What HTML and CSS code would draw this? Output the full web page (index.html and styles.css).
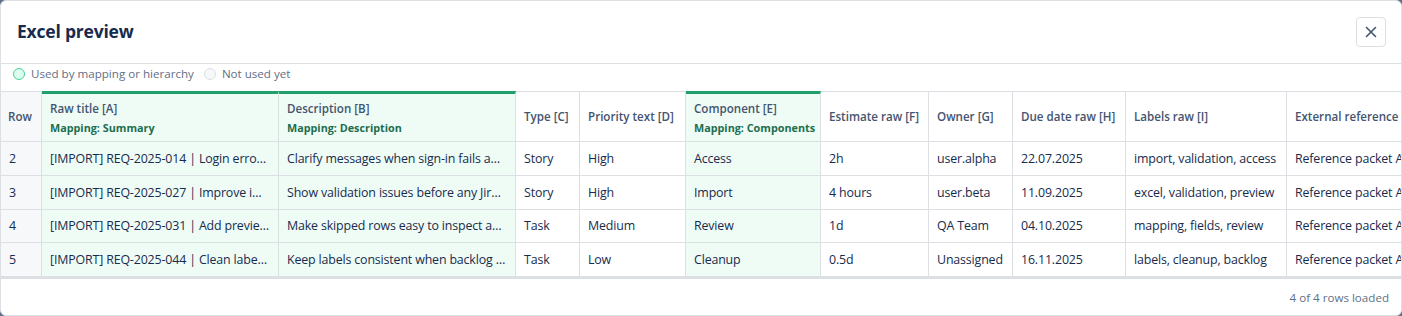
FILE: index.html
```html
<!DOCTYPE html>
<html lang="en">

<head>
    <meta charset="UTF-8">
    <meta name="viewport" content="width=device-width, initial-scale=1.0">
    <title>Excel preview</title>
    <link rel="stylesheet" href="styles.css">
</head>

<body>
    <div class="dialog">
        <header class="dialog-header">
            <h2>Excel preview</h2>
            <button class="close-button" aria-label="Close">
                <svg width="16" height="16" viewBox="0 0 16 16">
                    <path d="M3.5 3.5 L12.5 12.5 M12.5 3.5 L3.5 12.5" stroke="#44546f" stroke-width="1.6" stroke-linecap="round" fill="none" />
                </svg>
            </button>
        </header>

        <div class="legend">
            <span class="legend-item"><span class="dot dot-used"></span>Used by mapping or hierarchy</span>
            <span class="legend-item"><span class="dot dot-unused"></span>Not used yet</span>
        </div>

        <div class="table-wrap">
            <table class="preview-table">
                <thead>
                    <tr>
                        <th class="col-row">Row</th>
                        <th class="col-title mapped">Raw title [A]<span class="mapping">Mapping: Summary</span></th>
                        <th class="col-desc mapped">Description [B]<span class="mapping">Mapping: Description</span></th>
                        <th class="col-type">Type [C]</th>
                        <th class="col-priority">Priority text [D]</th>
                        <th class="col-component mapped">Component [E]<span class="mapping">Mapping: Components</span></th>
                        <th class="col-estimate">Estimate raw [F]</th>
                        <th class="col-owner">Owner [G]</th>
                        <th class="col-due">Due date raw [H]</th>
                        <th class="col-labels">Labels raw [I]</th>
                        <th class="col-ref">External reference [J]</th>
                    </tr>
                </thead>
                <tbody>
                    <tr>
                        <td class="row-num">2</td>
                        <td class="mapped">[IMPORT] REQ-2025-014 | Login error messages are unclear</td>
                        <td class="mapped">Clarify messages when sign-in fails and the account is locked</td>
                        <td>Story</td>
                        <td>High</td>
                        <td class="mapped">Access</td>
                        <td>2h</td>
                        <td>user.alpha</td>
                        <td>22.07.2025</td>
                        <td>import, validation, access</td>
                        <td>Reference packet A-14</td>
                    </tr>
                    <tr>
                        <td class="row-num">3</td>
                        <td class="mapped">[IMPORT] REQ-2025-027 | Improve import validation</td>
                        <td class="mapped">Show validation issues before any Jira issue is created</td>
                        <td>Story</td>
                        <td>High</td>
                        <td class="mapped">Import</td>
                        <td>4 hours</td>
                        <td>user.beta</td>
                        <td>11.09.2025</td>
                        <td>excel, validation, preview</td>
                        <td>Reference packet A-27</td>
                    </tr>
                    <tr>
                        <td class="row-num">4</td>
                        <td class="mapped">[IMPORT] REQ-2025-031 | Add preview for skipped rows</td>
                        <td class="mapped">Make skipped rows easy to inspect and fix</td>
                        <td>Task</td>
                        <td>Medium</td>
                        <td class="mapped">Review</td>
                        <td>1d</td>
                        <td>QA Team</td>
                        <td>04.10.2025</td>
                        <td>mapping, fields, review</td>
                        <td>Reference packet A-31</td>
                    </tr>
                    <tr>
                        <td class="row-num">5</td>
                        <td class="mapped">[IMPORT] REQ-2025-044 | Clean labels in backlog</td>
                        <td class="mapped">Keep labels consistent when backlog items are imported</td>
                        <td>Task</td>
                        <td>Low</td>
                        <td class="mapped">Cleanup</td>
                        <td>0.5d</td>
                        <td>Unassigned</td>
                        <td>16.11.2025</td>
                        <td>labels, cleanup, backlog</td>
                        <td>Reference packet A-44</td>
                    </tr>
                </tbody>
            </table>
        </div>

        <footer class="dialog-footer">4 of 4 rows loaded</footer>
    </div>
</body>

</html>
```

FILE: styles.css
```css
/* Page */
body {
    margin: 0;
    background-color: #626f86;
    font-family: 'Open Sans', 'Noto Sans', sans-serif;
    color: #172b4d;
}

.dialog {
    box-sizing: border-box;
    width: 1402px;
    height: 316px;
    background-color: #fff;
    border: 1px solid #dcdfe4;
    border-radius: 6px;
    overflow: hidden;
    display: flex;
    flex-direction: column;
}

/* Header */
.dialog-header {
    height: 62px;
    display: flex;
    align-items: center;
    justify-content: space-between;
    padding: 0 15px 0 16px;
    border-bottom: 1px solid #dcdfe4;
    flex-shrink: 0;
}

.dialog-header h2 {
    margin: 0 0 2px;
    font-size: 17.5px;
    font-weight: 700;
    letter-spacing: -0.2px;
    color: #172b4d;
}

.close-button {
    width: 30px;
    height: 30px;
    padding: 0;
    border: 1px solid #dcdfe4;
    border-radius: 4px;
    background-color: #fff;
    display: flex;
    align-items: center;
    justify-content: center;
    cursor: pointer;
}

/* Legend */
.legend {
    display: flex;
    gap: 10px;
    padding: 1px 12px 0;
    height: 26px;
    align-items: flex-start;
    font-size: 11.6px;
    line-height: 18px;
    color: #626f86;
    flex-shrink: 0;
}

.legend-item {
    display: flex;
    align-items: center;
    gap: 6px;
}

.dot {
    box-sizing: border-box;
    width: 12px;
    height: 12px;
    border-radius: 50%;
    border: 1.5px solid #dcdfe4;
    background-color: #f7f8f9;
}

.dot-used {
    border-color: #4bce97;
    background-color: #dcfff1;
}

/* Table */
.table-wrap {
    overflow: hidden;
    border-bottom: 1px solid #dcdfe4;
    flex-shrink: 0;
}

.preview-table {
    table-layout: fixed;
    width: 1526px;
    border-collapse: separate;
    border-spacing: 0;
    font-size: 12.4px;
    letter-spacing: -0.15px;
}

.preview-table th,
.preview-table td {
    box-sizing: border-box;
    border-right: 1px solid #dcdfe4;
    border-bottom: 1px solid #dcdfe4;
    text-align: left;
    white-space: nowrap;
    overflow: hidden;
    text-overflow: ellipsis;
}

.preview-table th {
    height: 51px;
    padding: 0 8px;
    border-top: 1px solid #dcdfe4;
    font-size: 11.6px;
    font-weight: 600;
    line-height: 18px;
    letter-spacing: 0;
    color: #44546f;
    vertical-align: middle;
}

.preview-table th.mapped {
    border-top: 3px solid #22a06b;
}

.preview-table td {
    height: 33.75px;
    padding: 0 8px;
    line-height: 19px;
    vertical-align: middle;
}

.preview-table .mapped {
    background-color: #effcf6;
}

.preview-table .col-row,
.preview-table .row-num {
    background-color: #f7f8f9;
}

.preview-table .col-row {
    padding: 0 7px;
}

.mapping {
    display: block;
    margin-top: 2px;
    font-size: 10.8px;
    font-weight: 700;
    line-height: 16px;
    color: #216e4e;
}

.col-row { width: 41px; }
.col-title { width: 237px; }
.col-desc { width: 237px; }
.col-type { width: 64px; }
.col-priority { width: 106px; }
.col-component { width: 135px; }
.col-estimate { width: 108px; }
.col-owner { width: 84px; }
.col-due { width: 113px; }
.col-labels { width: 161px; }
.col-ref { width: 240px; }

/* Footer */
.dialog-footer {
    flex: 1;
    display: flex;
    align-items: center;
    justify-content: flex-end;
    padding: 0 12px;
    border-top: 1px solid #dcdfe4;
    font-size: 11.6px;
    color: #626f86;
}
```
